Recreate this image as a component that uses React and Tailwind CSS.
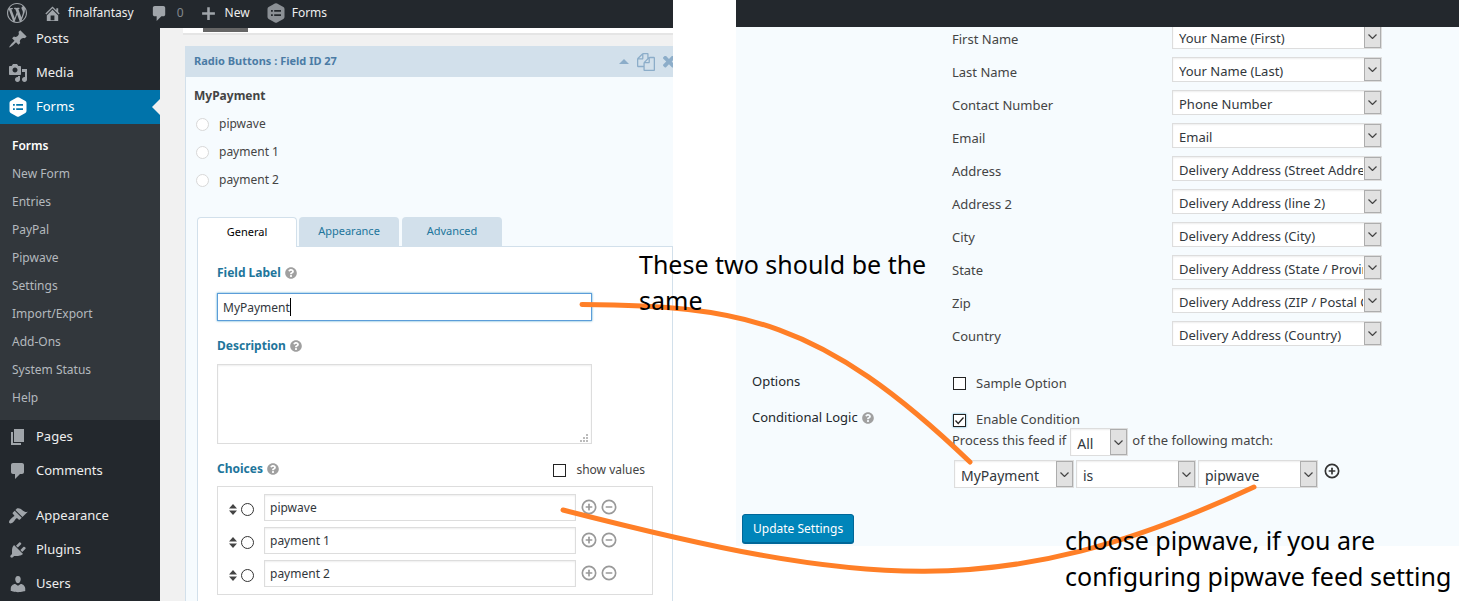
import React from "react";
import { FaQuestionCircle } from "react-icons/fa";
import { CirclePlus, CircleMinus } from "lucide-react";

const ICONS = {
  wordpress:
    "M20 10c0-5.51-4.49-10-10-10C4.48 0 0 4.49 0 10c0 5.52 4.48 10 10 10 5.51 0 10-4.48 10-10zM7.78 15.37L4.37 6.22c.55-.02 1.17-.08 1.17-.08.5-.06.44-1.13-.06-1.11 0 0-1.45.11-2.37.11-.18 0-.37 0-.58-.01C4.12 2.69 6.87 1.11 10 1.11c2.33 0 4.45.87 6.05 2.34-.68-.11-1.65.39-1.65 1.58 0 .74.45 1.36.9 2.1.35.61.55 1.36.55 2.46 0 1.49-1.4 5-1.4 5l-3.03-8.37c.54-.02.82-.17.82-.17.5-.05.44-1.25-.06-1.22 0 0-1.44.12-2.38.12-.87 0-2.33-.12-2.33-.12-.5-.03-.56 1.2-.06 1.22l.92.08 1.26 3.41zM17.41 10c.24-.64.74-1.87.43-4.25.7 1.29 1.05 2.71 1.05 4.25 0 3.29-1.73 6.24-4.4 7.78.97-2.59 1.94-5.2 2.92-7.78zM6.1 18.09C3.12 16.65 1.11 13.53 1.11 10c0-1.3.23-2.48.72-3.59C3.25 10.3 4.67 14.2 6.1 18.09zm4.03-6.63l2.58 6.98c-.86.29-1.76.45-2.71.45-.79 0-1.57-.11-2.29-.33.81-2.38 1.62-4.74 2.42-7.1z",
  home: "M16 8.5l1.53 1.53-1.06 1.06L10 4.6l-6.47 6.49-1.06-1.06L10 2.5l4 4v-2h2v4zm-6-2.46l6 5.99V18H4v-5.97zM12 17v-5H8v5h4z",
  plus: "M17.5 8.5v3h-6v6h-3v-6h-6v-3h6v-6h3v6z",
  posts:
    "M10.44 3.02l1.82-1.82 6.36 6.35-1.83 1.82c-1.05-.68-2.48-.57-3.41.36l-.75.75c-.92.93-1.04 2.35-.35 3.41l-1.83 1.82-2.41-2.41-2.8 2.79c-.42.42-3.38 2.71-3.8 2.29s1.86-3.39 2.28-3.81l2.79-2.79L4.1 9.36l1.83-1.82c1.05.69 2.48.57 3.4-.36l.75-.75c.93-.92 1.05-2.35.36-3.41z",
  media:
    "M13 11V4c0-.55-.45-1-1-1h-1.67L9 1H5L3.67 3H2c-.55 0-1 .45-1 1v7c0 .55.45 1 1 1h10c.55 0 1-.45 1-1zM7 4.5c1.38 0 2.5 1.12 2.5 2.5S8.38 9.5 7 9.5 4.5 8.38 4.5 7 5.62 4.5 7 4.5zM14 6h5v10.5c0 1.38-1.12 2.5-2.5 2.5S14 17.88 14 16.5s1.12-2.5 2.5-2.5c.17 0 .34.02.5.05V9h-3V6zm-4 8.05V13h2v3.5c0 1.38-1.12 2.5-2.5 2.5S7 17.88 7 16.5 8.12 14 9.5 14c.17 0 .34.02.5.05z",
  pages: "M6 15V2h10v13H6zm-1 1h8v2H3V5h2v11z",
  comments:
    "M5 2h9c1.1 0 2 .9 2 2v7c0 1.1-.9 2-2 2h-2l-5 5v-5H5c-1.1 0-2-.9-2-2V4c0-1.1.9-2 2-2z",
  appearance:
    "M14.48 11.06L7.41 3.99l1.5-1.5c.5-.56 2.3-.47 3.51.32 1.21.8 1.43 1.28 2.91 2.1 1.18.64 2.45 1.26 4.45.85zm-.71.71L6.7 4.7 4.93 6.47c-.39.39-.39 1.02 0 1.41l1.06 1.06c.39.39.39 1.03 0 1.42-.6.6-1.43 1.11-2.21 1.69-.35.26-.7.53-1.01.84C1.43 14.23.4 16.08 1.4 17.07c.99 1 2.84-.03 4.18-1.36.31-.31.58-.66.85-1.02.57-.78 1.08-1.61 1.69-2.21.39-.39 1.02-.39 1.41 0l1.06 1.06c.39.39 1.02.39 1.41 0z",
  plugins:
    "M13.11 4.36L9.87 7.6 8 5.73l3.24-3.24c.35-.34 1.05-.2 1.56.32.52.51.66 1.21.31 1.55zm-8 1.77l.91-1.12 9.01 9.01-1.19.84c-.71.71-2.63 1.16-3.82 1.16H6.14L4.9 17.26c-.59.59-1.54.59-2.12 0-.59-.58-.59-1.53 0-2.12l1.24-1.24v-3.88c0-1.13.4-3.19 1.09-3.89zm7.26 3.97l3.24-3.24c.34-.35 1.04-.21 1.55.31.52.51.66 1.21.31 1.55l-3.24 3.25z",
  users:
    "M10 9.25c-2.27 0-2.73-3.44-2.73-3.44C7 4.02 7.82 2 9.97 2c2.16 0 2.98 2.02 2.71 3.81 0 0-.41 3.44-2.68 3.44zm0 2.57L12.72 10c2.39 0 4.52 2.33 4.52 4.53v2.49s-3.65 1.13-7.24 1.13c-3.65 0-7.24-1.13-7.24-1.13v-2.49c0-2.25 1.94-4.48 4.47-4.48z",
};

function Icon({ name, className = "size-5" }) {
  return (
    <svg viewBox="0 0 20 20" fill="currentColor" aria-hidden="true" className={"shrink-0 " + className}>
      <path d={ICONS[name]} />
    </svg>
  );
}

function HexIcon({ className = "size-5" }) {
  return (
    <svg viewBox="0 0 20 20" fill="currentColor" fillRule="evenodd" aria-hidden="true" className={"shrink-0 " + className}>
      <path d="M8.9.6q1.1-.6 2.2 0l6.3 3.5q1.1.6 1.1 1.9v8q0 1.3-1.1 1.9l-6.3 3.5q-1.1.6-2.2 0l-6.3-3.5Q1.500 15.300 1.500 14V6q0-1.300 1.100-1.900zM5 7v1.800h1.800V7zm3.200 0v1.800H15V7zM5 11.200V13h1.800v-1.800zm3.200 0V13H15v-1.800z" />
    </svg>
  );
}

function Help() {
  return <FaQuestionCircle aria-hidden="true" className="size-3 text-[#a0a0a0]" />;
}

function MenuItem({ icon, label }) {
  return (
    <a href="#" className="flex h-[34px] items-center gap-2 pl-2 text-[13px] text-[#eee]">
      <Icon name={icon} className="size-5 text-[#a0a5aa]" />
      {label}
    </a>
  );
}

const SUBMENU = ["Forms", "New Form", "Entries", "PayPal", "Pipwave", "Settings", "Import/Export", "Add-Ons", "System Status", "Help"];

function Sidebar() {
  return (
    <nav className="w-40 shrink-0 overflow-hidden bg-[#23282d]">
      <div className="-mt-1.5">
        <MenuItem icon="posts" label="Posts" />
        <MenuItem icon="media" label="Media" />
        <a href="#" className="flex h-[34px] items-center gap-2 bg-[#0073aa] pl-2 text-[13px] text-white">
          <HexIcon />
          Forms
          <svg viewBox="0 0 8 16" aria-hidden="true" className="ml-auto h-4 w-2">
            <path d="M8 0v16L0 8z" fill="#f1f1f1" />
          </svg>
        </a>
        <ul className="bg-[#32373c] py-2">
          {SUBMENU.map((item, i) => (
            <li key={item}>
              <a
                href="#"
                className={
                  i === 0
                    ? "flex h-7 items-center pl-3 text-xs font-semibold text-white"
                    : "flex h-7 items-center pl-3 text-xs text-[#b4b9be]"
                }
              >
                {item}
              </a>
            </li>
          ))}
        </ul>
        <MenuItem icon="pages" label="Pages" />
        <MenuItem icon="comments" label="Comments" />
        <div className="h-[11px]" />
        <MenuItem icon="appearance" label="Appearance" />
        <MenuItem icon="plugins" label="Plugins" />
        <MenuItem icon="users" label="Users" />
      </div>
    </nav>
  );
}

function AdminBar() {
  return (
    <header className="flex h-7 shrink-0 items-center bg-[#23282d] pb-0.5 pl-[7px] text-xs text-[#eee]">
      <a href="#" aria-label="WordPress" className="mr-4">
        <Icon name="wordpress" className="size-5 text-[#a0a5aa]" />
      </a>
      <a href="#" className="mr-4 flex items-center gap-1.5">
        <Icon name="home" className="size-[19px] text-[#a0a5aa]" />
        finalfantasy
      </a>
      <a href="#" className="mr-4 flex items-center gap-2 text-[#83888d]">
        <Icon name="comments" className="size-[19px] text-[#a0a5aa]" />0
      </a>
      <a href="#" className="mr-4 flex items-center gap-2">
        <Icon name="plus" className="size-[17px] text-[#a0a5aa]" />
        New
      </a>
      <a href="#" className="flex items-center gap-1.5">
        <HexIcon className="size-5 text-[#8b9095]" />
        Forms
      </a>
    </header>
  );
}

const FIELD = "border border-[#ddd] bg-white px-[5px] text-xs text-[#32373c] shadow-[inset_0_1px_2px_rgba(0,0,0,0.07)]";

function Choice({ value, index }) {
  return (
    <li className="flex h-[27px] items-center">
      <svg viewBox="0 0 8 11" aria-hidden="true" className="mt-1 h-[11px] w-2">
        <path d="M4 0l4 4.500H0zM0 6.500h8L4 11z" fill="#444" />
      </svg>
      <input
        type="radio"
        name="default-choice"
        aria-label={"Select choice " + index + " by default"}
        className="mt-1 mr-[10px] ml-1 size-[13px] appearance-none rounded-full border border-[#333] bg-white"
      />
      <input aria-label={"Choice " + index} defaultValue={value} className={"h-[27px] w-[312px] " + FIELD} />
      <button type="button" aria-label="Add choice" className="mr-1 mb-0.5 ml-[5px] text-[#999]">
        <CirclePlus className="size-4" strokeWidth={2.5} />
      </button>
      <button type="button" aria-label="Remove choice" className="mb-0.5 text-[#999]">
        <CircleMinus className="size-4" strokeWidth={2.5} />
      </button>
    </li>
  );
}

const LABEL = "flex h-5 items-center gap-1 text-[12px] font-bold text-[#21759b]";

function FieldEditor() {
  return (
    <main className="min-w-0 flex-1 overflow-hidden bg-[#f1f1f1]">
      <div className="ml-[23px] h-[7px] border-b-2 border-[#e5e5e5] bg-white pl-5">
        <div className="h-1 w-[45px] bg-[#666]" />
      </div>
      <section className="mt-[11px] ml-[25px] border-l border-[#d2e0eb] bg-[#f6fbfe]">
        <div className="flex h-[31px] items-center overflow-hidden bg-[#d2e0eb] pl-2 text-[11px] font-bold text-[#4a7ba5]">
          Radio Buttons : Field ID 27
          <div className="-mr-0.5 ml-auto flex shrink-0 items-center gap-2 text-[#8cadc9]">
            <button type="button" aria-label="Collapse">
              <svg viewBox="0 0 10 5" fill="currentColor" aria-hidden="true" className="h-[5px] w-[10px]">
                <path d="M5 0l5 5H0z" />
              </svg>
            </button>
            <button type="button" aria-label="Duplicate">
              <svg viewBox="0 0 1792 1792" fill="currentColor" aria-hidden="true" className="size-[18px]">
                <path d="M1696 384q40 0 68 28t28 68v1216q0 40-28 68t-68 28h-960q-40 0-68-28t-28-68v-288h-544q-40 0-68-28t-28-68v-672q0-40 20-88t48-76l408-408q28-28 76-48t88-20h416q40 0 68 28t28 68v328q68-40 128-40h416zm-544 213l-299 299h299v-299zm-640-384l-299 299h299v-299zm196 647l316-316v-416h-384v416q0 40-28 68t-68 28h-416v640h512v-256q0-40 20-88t48-76zm956 804v-1152h-384v416q0 40-28 68t-68 28h-416v640h896z" />
              </svg>
            </button>
            <button type="button" aria-label="Delete">
              <svg viewBox="300 400 1200 1200" fill="currentColor" aria-hidden="true" className="size-3">
                <path d="M1490 1322q0 40-28 68l-136 136q-28 28-68 28t-68-28l-294-294-294 294q-28 28-68 28t-68-28l-136-136q-28-28-28-68t28-68l294-294-294-294q-28-28-28-68t28-68l136-136q28-28 68-28t68 28l294 294 294-294q28-28 68-28t68 28l136 136q28 28 28 68t-28 68l-294 294 294 294q28 28 28 68z" />
              </svg>
            </button>
          </div>
        </div>
        <fieldset className="h-[140px] pl-2 text-xs text-[#444]">
          <legend className="pt-[9px] text-xs leading-5 font-bold">MyPayment</legend>
          <div className="mt-1 flex flex-col">
            {["pipwave", "payment 1", "payment 2"].map((name) => (
              <label key={name} className="flex h-7 items-center gap-2.5 pl-0.5">
                <input type="radio" name="preview" className="size-[13px] appearance-none rounded-full border border-[#d8d8d8] bg-white" />
                {name}
              </label>
            ))}
          </div>
        </fieldset>
        <div className="ml-[11px]">
          <div role="tablist" className="flex text-[11px] text-[#21759b]">
            <button type="button" role="tab" aria-selected="true" className="-mb-px h-[30px] w-[100px] rounded-t border border-b-0 border-[#d2e0eb] bg-white text-black">
              General
            </button>
            <button type="button" role="tab" aria-selected="false" className="ml-0.5 h-[29px] w-[100px] rounded-t bg-[#d2e0eb]">
              Appearance
            </button>
            <button type="button" role="tab" aria-selected="false" className="ml-[3px] h-[29px] w-[100px] rounded-t bg-[#d2e0eb]">
              Advanced
            </button>
          </div>
          <div className="h-[380px] border border-[#d2e0eb] bg-white pt-4 pl-[19px]">
            <label htmlFor="field-label" className={LABEL}>
              Field Label <Help />
            </label>
            <div className="relative mt-2.5 w-[375px]">
              <input
                id="field-label"
                defaultValue="MyPayment"
                className="block h-7 w-full border border-[#5b9dd9] bg-white px-[5px] text-xs text-[#32373c] shadow-[0_0_2px_rgba(30,140,190,0.8)]"
              />
              <span className="absolute top-[5px] left-[73px] h-[18px] w-px bg-black" />
            </div>
            <label htmlFor="description" className={"mt-[15px] " + LABEL}>
              Description <Help />
            </label>
            <div className="relative mt-2 w-[375px]">
              <textarea id="description" className={"block h-20 w-full resize-none " + FIELD} />
              <svg viewBox="0 0 8 8" fill="#bbb" aria-hidden="true" className="absolute right-1 bottom-0.5 size-2">
                <path d="M0 6h2v2H0zM3 6h2v2H3zM6 6h2v2H6zM3 3h2v2H3zM6 3h2v2H6zM6 0h2v2H6z" />
              </svg>
            </div>
            <div className="mt-[15px] flex w-[436px] items-center">
              <div className={LABEL}>
                Choices <Help />
              </div>
              <label className="mt-0.5 mr-2 ml-auto flex items-center gap-2.5 text-xs text-[#444]">
                <input type="checkbox" className="size-[13px] appearance-none border border-[#222] bg-white" />
                show values
              </label>
            </div>
            <ul className="mt-[7px] flex w-[436px] flex-col gap-1.5 border border-[#ddd] py-[7px] pl-[11px]">
              <Choice value="pipwave" index={1} />
              <Choice value="payment 1" index={2} />
              <Choice value="payment 2" index={3} />
            </ul>
          </div>
        </div>
      </section>
    </main>
  );
}

function Select({ id, label, value, options = [], className, selectClass }) {
  return (
    <div className={"relative " + className}>
      <select
        id={id}
        aria-label={label}
        defaultValue={value}
        className={"block size-full appearance-none border border-[#ddd] bg-white pt-1 pr-[18px] pl-1.5 text-[#32373c] shadow-[inset_0_1px_2px_rgba(0,0,0,0.07)] " + selectClass}
      >
        <option>{value}</option>
        {options.map((o) => (
          <option key={o}>{o}</option>
        ))}
      </select>
      <span className="pointer-events-none absolute inset-y-px right-px flex w-[17px] items-center justify-center border border-[#adadad] bg-[#e1e1e1]">
        <svg viewBox="0 0 9 5" fill="none" stroke="#444" strokeWidth="1.2" aria-hidden="true" className="h-[5px] w-[9px]">
          <path d="M.5.5l4 4 4-4" />
        </svg>
      </span>
    </div>
  );
}

const MAPPING = [
  ["First Name", "Your Name (First)"],
  ["Last Name", "Your Name (Last)"],
  ["Contact Number", "Phone Number"],
  ["Email", "Email"],
  ["Address", "Delivery Address (Street Address)"],
  ["Address 2", "Delivery Address (line 2)"],
  ["City", "Delivery Address (City)"],
  ["State", "Delivery Address (State / Province)"],
  ["Zip", "Delivery Address (ZIP / Postal Code)"],
  ["Country", "Delivery Address (Country)"],
];

function FeedSettings() {
  return (
    <section className="flex min-w-0 flex-[723] flex-col">
      <div className="z-10 h-[27px] shrink-0 bg-[#23282d]" />
      <form className="flow-root h-[519px] shrink-0 bg-[#f6fbfe] text-[13px] text-[#444]">
        <div className="-mt-[3px] ml-[216px] flex flex-col gap-2">
          {MAPPING.map(([label, value], i) => (
            <div key={label} className="flex h-[25px]">
              <label htmlFor={"map-" + i} className="w-[220px] pt-[5px] leading-5">
                {label}
              </label>
              <Select id={"map-" + i} value={value} className="h-[25px] w-[210px]" selectClass="text-[13px]" />
            </div>
          ))}
        </div>
        <div className="mt-[27px] flex pl-4">
          <div className="w-[200px] leading-4 text-[#23282d]">Options</div>
          <label className="mt-0.5 flex items-center gap-2.5 pl-px leading-4">
            <input type="checkbox" className="size-[13px] appearance-none border border-[#222] bg-white" />
            Sample Option
          </label>
        </div>
        <div className="mt-[19px] flex pl-4">
          <div className="flex h-4 w-[200px] items-center gap-1 text-[#23282d]">
            Conditional Logic <Help />
          </div>
          <div>
            <label className="mt-0.5 flex h-4 items-center gap-2.5 pl-px">
              <span className="relative flex">
                <input
                  type="checkbox"
                  defaultChecked
                  className="size-[13px] appearance-none border border-[#222] bg-white shadow-[0_0_2px_rgba(30,140,190,0.8)]"
                />
                <svg viewBox="0 0 13 13" fill="none" stroke="#222" strokeWidth="1.300" aria-hidden="true" className="absolute inset-0 size-[13px]">
                  <path d="M2.500 6.500l2.700 3L10.500 3.500" />
                </svg>
              </span>
              Enable Condition
            </label>
            <div className="flex h-7 gap-1">
              <span className="pt-0.5 leading-5">Process this feed if</span>
              <Select label="Match type" value="All" options={["Any"]} className="h-7 w-[58px]" selectClass="text-sm" />
              <span className="pt-0.5 leading-5">of the following match:</span>
            </div>
            <div className="mt-1 flex items-start gap-0.5 pl-0.5">
              <Select label="Condition field" value="MyPayment" className="h-7 w-[120px]" selectClass="text-sm" />
              <Select label="Condition operator" value="is" options={["is not"]} className="h-7 w-[120px]" selectClass="text-sm" />
              <Select label="Condition value" value="pipwave" options={["payment 1", "payment 2"]} className="h-7 w-[120px]" selectClass="text-sm" />
              <button type="button" aria-label="Add rule" className="mt-[3px] ml-1 text-[#333]">
                <CirclePlus className="size-4" strokeWidth={2.5} />
              </button>
            </div>
          </div>
        </div>
        <button
          type="submit"
          className="mt-[26px] ml-1.5 h-[29px] rounded-[3px] border border-[#006799] bg-[#0085ba] px-2.5 text-xs text-white shadow-[0_1px_0_#006799]"
        >
          Update Settings
        </button>
      </form>
      <div className="flex-1 bg-white" />
    </section>
  );
}

export default function App() {
  return (
    <div className="relative flex h-screen gap-[63px] overflow-hidden bg-white font-['Noto_Sans','Open_Sans',sans-serif]">
      <div className="flex min-w-0 flex-[673] flex-col overflow-hidden">
        <AdminBar />
        <div className="flex min-h-0 flex-1">
          <Sidebar />
          <FieldEditor />
        </div>
      </div>
      <FeedSettings />
      <svg
        viewBox="0 0 1459 601"
        preserveAspectRatio="none"
        fill="none"
        stroke="#ff7f27"
        strokeWidth="5"
        strokeLinecap="round"
        aria-hidden="true"
        className="pointer-events-none absolute inset-0 z-20 size-full"
      >
        <path d="M582 304.500C740 306 820 318 970 462" />
        <path d="M563 510C860 586 1000 605 1254 487" />
      </svg>
      <p className="pointer-events-none absolute top-[246px] left-[639px] z-30 w-[300px] text-[25px] leading-9 text-black">
        These two should be the same
      </p>
      <p className="pointer-events-none absolute top-[522px] left-[1065px] z-30 w-[394px] text-[25px] leading-9 text-black">
        choose pipwave, if you are configuring pipwave feed setting
      </p>
    </div>
  );
}
